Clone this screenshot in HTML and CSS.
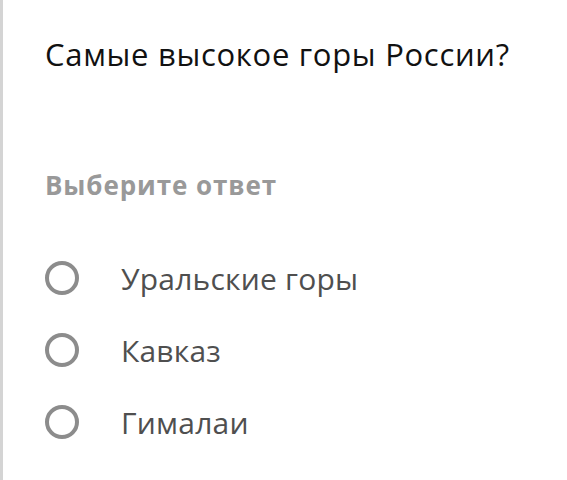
FILE: index.html
```html
<!DOCTYPE html>
<html lang="ru">

<head>
    <meta charset="UTF-8">
    <meta name="viewport" content="width=device-width, initial-scale=1.0">
    <title>Вопрос</title>
    <link rel="stylesheet" href="styles.css">
</head>

<body>
    <div class="question-card">
        <h2 class="question-title">Самые высокое горы России?</h2>

        <p class="answer-hint">Выберите ответ</p>

        <div class="answer-list">
            <label class="answer-option">
                <span class="radio-mark"></span>
                <span class="answer-text">Уральские горы</span>
            </label>
            <label class="answer-option">
                <span class="radio-mark"></span>
                <span class="answer-text">Кавказ</span>
            </label>
            <label class="answer-option">
                <span class="radio-mark"></span>
                <span class="answer-text">Гималаи</span>
            </label>
        </div>
    </div>
</body>

</html>
```

FILE: styles.css
```css
body {
    margin: 0;
    background-color: #ffffff;
    font-family: 'Open Sans', sans-serif;
}

.question-card {
    min-height: 480px;
    box-sizing: border-box;
    border-left: 3px solid #d4d4d4;
    padding: 32px 20px 0 42px;
}

.question-title {
    margin: 0;
    font-size: 31px;
    font-weight: 400;
    line-height: 44px;
    letter-spacing: 0.7px;
    color: #111111;
}

.answer-hint {
    margin: 91px 0 0;
    font-size: 26px;
    font-weight: 700;
    line-height: 36px;
    letter-spacing: 0.9px;
    color: #999999;
}

.answer-list {
    display: flex;
    flex-direction: column;
    gap: 30px;
    margin-top: 54px;
}

.answer-option {
    display: flex;
    align-items: center;
    gap: 42px;
    height: 42px;
}

.radio-mark {
    width: 34px;
    height: 34px;
    box-sizing: border-box;
    border: 4px solid #8c8c8c;
    border-radius: 50%;
    flex-shrink: 0;
}

.answer-text {
    font-size: 30px;
    letter-spacing: 0.2px;
    color: #4f4f4f;
}
```
